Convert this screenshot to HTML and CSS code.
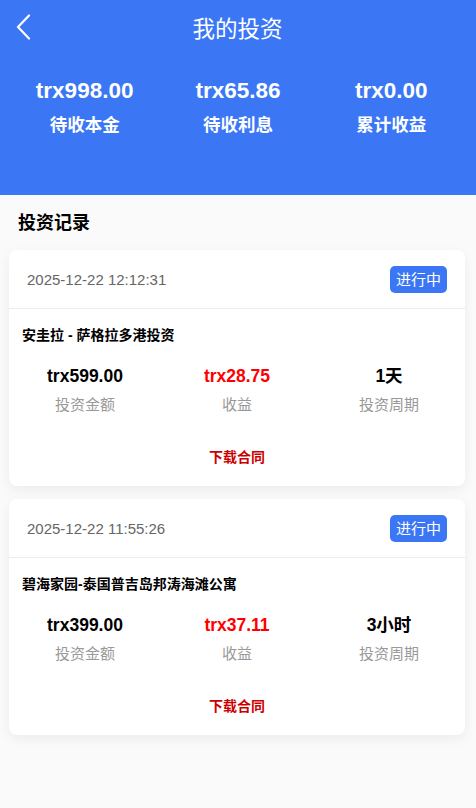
FILE: index.html
```html
<!DOCTYPE html>
<html lang="zh">
<head>
<meta charset="utf-8">
<link rel="stylesheet" href="styles.css">
</head>
<body>
<div class="hero">
  <div class="topbar">
    <svg class="back" width="16" height="26" viewBox="0 0 16 26"><polyline points="13,1.5 2,13 13,24.5" fill="none" stroke="#fff" stroke-width="2.2" stroke-linecap="round" stroke-linejoin="round"/></svg>
    <div class="title">我的投资</div>
  </div>
  <div class="stats">
    <div class="stat"><div class="sv">trx998.00</div><div class="sl">待收本金</div></div>
    <div class="stat"><div class="sv">trx65.86</div><div class="sl">待收利息</div></div>
    <div class="stat"><div class="sv">trx0.00</div><div class="sl">累计收益</div></div>
  </div>
</div>
<div class="section">投资记录</div>
<div class="list">
  <div class="card">
    <div class="chead"><span class="date">2025-12-22 12:12:31</span><span class="badge">进行中</span></div>
    <div class="cname">安圭拉 - 萨格拉多港投资</div>
    <div class="row">
      <div class="col"><div class="v">trx599.00</div><div class="l">投资金额</div></div>
      <div class="col"><div class="v red">trx28.75</div><div class="l">收益</div></div>
      <div class="col"><div class="v">1天</div><div class="l">投资周期</div></div>
    </div>
    <div class="dl">下载合同</div>
  </div>
  <div class="card">
    <div class="chead"><span class="date">2025-12-22 11:55:26</span><span class="badge">进行中</span></div>
    <div class="cname">碧海家园-泰国普吉岛邦涛海滩公寓</div>
    <div class="row">
      <div class="col"><div class="v">trx399.00</div><div class="l">投资金额</div></div>
      <div class="col"><div class="v red">trx37.11</div><div class="l">收益</div></div>
      <div class="col"><div class="v">3小时</div><div class="l">投资周期</div></div>
    </div>
    <div class="dl">下载合同</div>
  </div>
</div>
</body>
</html>
```
FILE: styles.css
```css
* { box-sizing: border-box; }
html, body { margin: 0; padding: 0; }
body {
  background: #fafafa;
  font-family: "Liberation Sans", Arial, "Noto Sans CJK SC", sans-serif;
  color: #000;
  width: 476px;
  min-height: 808px;
}
.hero {
  background: #3b77f5;
  height: 195px;
  color: #fff;
}
.topbar {
  position: relative;
  height: 60px;
  display: flex;
  align-items: center;
  justify-content: center;
}
.back {
  position: absolute;
  left: 16px;
  top: 14px;
}
.title {
  font-size: 22.5px;
  line-height: 60px;
  margin-left: -1px;
}
.stats {
  display: grid;
  grid-template-columns: repeat(3, 1fr);
  padding: 18px 8px 0;
}
.stat { text-align: center; }
.sv { font-size: 22.5px; font-weight: bold; line-height: 26px; }
.sl { font-size: 17.5px; font-weight: bold; line-height: 24px; margin-top: 9px; }
.section {
  font-size: 18px;
  font-weight: bold;
  padding: 13px 18px 0;
  line-height: 30px;
  height: 55px;
}
.list {
  display: flex;
  flex-direction: column;
  gap: 13px;
  padding: 0 11px 0 9px;
}
.card {
  background: #fff;
  border-radius: 8px;
  box-shadow: 0 4px 12px rgba(0,0,0,0.06);
  height: 236px;
}
.chead {
  height: 59px;
  border-bottom: 1px solid #ececec;
  display: flex;
  align-items: center;
  justify-content: space-between;
  padding: 0 18px 0 18px;
}
.date { font-size: 15px; color: #666; }
.badge {
  background: #3b77f5;
  color: #fff;
  font-size: 15px;
  border-radius: 5px;
  height: 27px;
  line-height: 27px;
  padding: 0 6px;
}
.cname {
  font-size: 14px;
  font-weight: bold;
  padding: 16px 13px 0;
  line-height: 20px;
}
.row {
  display: grid;
  grid-template-columns: repeat(3, 1fr);
  margin-top: 20px;
}
.col { text-align: center; }
.v { font-size: 17.5px; font-weight: bold; line-height: 22px; }
.v.red { color: #ff0000; }
.l { font-size: 15px; color: #999; line-height: 20px; margin-top: 8px; }
.dl {
  text-align: center;
  font-size: 14px;
  font-weight: bold;
  color: #cc0000;
  margin-top: 32px;
  line-height: 20px;
}
```
